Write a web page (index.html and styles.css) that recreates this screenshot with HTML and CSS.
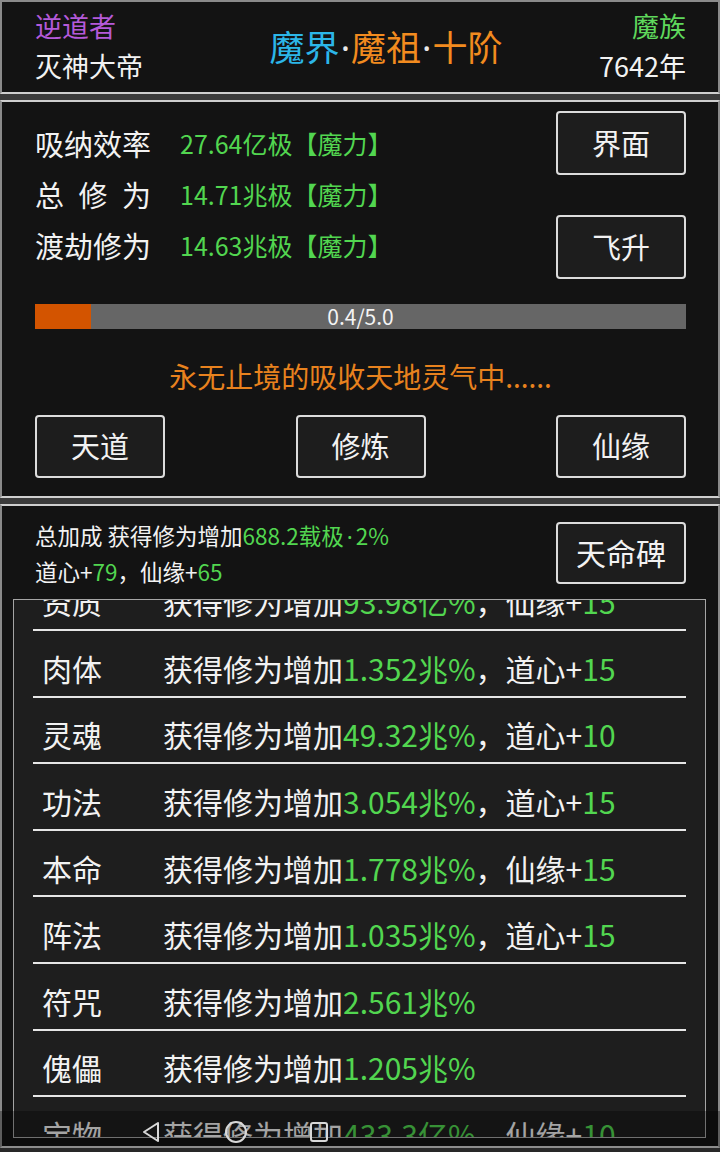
FILE: index.html
```html
<!DOCTYPE html>
<html lang="zh">
<head>
<meta charset="utf-8">
<title>修仙</title>
<link rel="stylesheet" href="styles.css">
</head>
<body>
<div class="page">
  <section class="panel header">
    <div class="hcol">
      <div class="purple">逆道者</div>
      <div>灭神大帝</div>
    </div>
    <div class="title"><span class="cyan">魔界</span><span class="dot">·</span><span class="orange">魔祖</span><span class="dot">·</span><span class="orange">十阶</span></div>
    <div class="hcol right">
      <div class="green">魔族</div>
      <div>7642年</div>
    </div>
  </section>

  <section class="panel main">
    <div class="top">
      <div class="stats">
        <div class="stat"><div class="label">吸纳效率</div><div class="val">27.64亿极【魔力】</div></div>
        <div class="stat"><div class="label">总修为</div><div class="val">14.71兆极【魔力】</div></div>
        <div class="stat"><div class="label">渡劫修为</div><div class="val">14.63兆极【魔力】</div></div>
      </div>
      <div class="btncol">
        <div class="btn">界面</div>
        <div class="btn">飞升</div>
      </div>
    </div>
    <div class="bar">
      <div class="fill" style="width:8.6%"></div>
      <div class="bar-text">0.4/5.0</div>
    </div>
    <div class="msg">永无止境的吸收天地灵气中......</div>
    <div class="btnrow">
      <div class="btn">天道</div>
      <div class="btn">修炼</div>
      <div class="btn">仙缘</div>
    </div>
  </section>

  <section class="panel bonus-panel">
    <div class="bonus-head">
      <div class="bonus">
        <div>总加成 获得修为增加<span class="g">688.2载极<span class="ndot">·</span>2%</span></div>
        <div>道心+<span class="g">79</span>，仙缘+<span class="g">65</span></div>
      </div>
      <div class="btn big">天命碑</div>
    </div>
    <div class="list">
      <div class="rows">
        <div class="row"><span class="rlabel">资质</span><span>获得修为增加<span class="g">93.98亿%</span>，仙缘+<span class="g">15</span></span></div>
        <div class="row"><span class="rlabel">肉体</span><span>获得修为增加<span class="g">1.352兆%</span>，道心+<span class="g">15</span></span></div>
        <div class="row"><span class="rlabel">灵魂</span><span>获得修为增加<span class="g">49.32兆%</span>，道心+<span class="g">10</span></span></div>
        <div class="row"><span class="rlabel">功法</span><span>获得修为增加<span class="g">3.054兆%</span>，道心+<span class="g">15</span></span></div>
        <div class="row"><span class="rlabel">本命</span><span>获得修为增加<span class="g">1.778兆%</span>，仙缘+<span class="g">15</span></span></div>
        <div class="row"><span class="rlabel">阵法</span><span>获得修为增加<span class="g">1.035兆%</span>，道心+<span class="g">15</span></span></div>
        <div class="row"><span class="rlabel">符咒</span><span>获得修为增加<span class="g">2.561兆%</span></span></div>
        <div class="row"><span class="rlabel">傀儡</span><span>获得修为增加<span class="g">1.205兆%</span></span></div>
        <div class="row"><span class="rlabel">宝物</span><span>获得修为增加<span class="g">433.3亿%</span>，仙缘+<span class="g">10</span></span></div>
      </div>
    </div>
  </section>
</div>

<nav class="nav">
  <svg class="ico tri" width="20" height="24" viewBox="0 0 20 24"><path d="M17 3 L3 12 L17 21 Z" fill="none" stroke="#d8d8d8" stroke-width="2" stroke-linejoin="round"/></svg>
  <svg class="ico circ" width="24" height="24" viewBox="0 0 24 24"><circle cx="12" cy="12" r="10" fill="none" stroke="#d8d8d8" stroke-width="2"/></svg>
  <svg class="ico sq" width="20" height="24" viewBox="0 0 20 24"><rect x="2" y="3" width="16" height="18" rx="2" fill="none" stroke="#d8d8d8" stroke-width="2"/></svg>
</nav>
</body>
</html>
```

FILE: styles.css
```css
* { box-sizing: border-box; margin: 0; padding: 0; }

html, body {
  width: 720px;
  height: 1152px;
  overflow: hidden;
}

body {
  background: #3b3b3b;
  font-family: "Noto Sans CJK SC", "Noto Sans", sans-serif;
  color: #f2f2f2;
}

.page {
  display: flex;
  flex-direction: column;
  gap: 6px;
  height: 1148px;
}

.panel {
  background: #131313;
  border: 2px solid #cfcfcf;
  border-left-color: #8a8a8a;
  border-right-color: #8a8a8a;
}

/* header */
.header {
  height: 94px;
  display: flex;
  align-items: center;
  padding: 0 32px 0 33px;
  border-top-color: #8a8a8a;
}

.hcol {
  font-size: 27px;
  line-height: 40px;
  white-space: nowrap;
  margin-top: -2px;
}

.hcol.right { text-align: right; }

.title {
  flex: 1;
  text-align: center;
  font-size: 35px;
  line-height: 44px;
  padding-left: 30px;
  white-space: nowrap;
}

.purple { color: #b45ad9; }
.cyan { color: #2cb6e8; }
.orange { color: #f28b1f; }
.green { color: #5fd85c; }
.dot {
  color: #e8e8e8;
  font-family: "Noto Sans", sans-serif;
  margin: 0 1px;
}
.ndot {
  font-family: "Noto Sans", sans-serif;
  margin: 0 3px;
}
.g { color: #52d650; }

/* main panel */
.main {
  height: 398px;
  padding: 0 32px 0 33px;
  display: flex;
  flex-direction: column;
}

.top {
  display: flex;
  justify-content: space-between;
}

.stats { padding-top: 15px; }

.stat {
  display: flex;
  align-items: center;
  height: 51px;
}

.label {
  width: 116px;
  font-size: 29px;
  text-align: justify;
  text-align-last: justify;
  white-space: nowrap;
}

.val {
  margin-left: 29px;
  font-size: 25px;
  color: #52d650;
  white-space: nowrap;
}

.btncol {
  padding-top: 9px;
  display: flex;
  flex-direction: column;
  gap: 40px;
}

.btn {
  width: 130px;
  height: 64px;
  border: 2px solid #dcdcdc;
  border-radius: 4px;
  background: #1d1d1d;
  display: flex;
  align-items: center;
  justify-content: center;
  padding-bottom: 3px;
  font-size: 29px;
  color: #f2f2f2;
}

.bar {
  margin-top: 25px;
  height: 25px;
  background: #666666;
  display: grid;
}

.bar > * { grid-area: 1 / 1; }

.fill {
  background: #d35400;
  height: 100%;
}

.bar-text {
  text-align: center;
  font-size: 21px;
  line-height: 25px;
  color: #f4f4f4;
}

.msg {
  margin-top: 29px;
  text-align: center;
  font-size: 28px;
  line-height: 36px;
  color: #e8821e;
}

.btnrow {
  margin-top: 21px;
  display: flex;
  justify-content: space-between;
}

.btnrow .btn { height: 63px; }

/* bonus panel */
.bonus-panel {
  flex: 1;
  display: flex;
  flex-direction: column;
  min-height: 0;
}

.bonus-head {
  display: flex;
  justify-content: space-between;
  padding: 15px 32px 0 33px;
}

.bonus {
  font-size: 22.5px;
  line-height: 34px;
  white-space: nowrap;
  margin-top: -3px;
}

.btn.big {
  height: 62px;
  margin-top: 1px;
  font-size: 30px;
}

.list {
  flex: 1;
  margin: 11px 12px 8px 11px;
  border: 1px solid #a5a5a5;
  background: #1e1e1e;
  overflow: hidden;
}

.rows {
  margin: -35.6px 19px 0 19px;
}

.row {
  height: 66.6px;
  border-bottom: 2px solid #e6e6e6;
  display: flex;
  align-items: center;
  padding: 9px 0 0 9px;
  font-size: 30px;
  white-space: nowrap;
}

.rlabel { width: 121px; flex: none; }

/* system nav bar */
.nav {
  position: fixed;
  left: 0;
  right: 0;
  bottom: 0;
  height: 41px;
  background: rgba(0, 0, 0, 0.32);
  display: flex;
  align-items: center;
  padding-left: 141px;
}

.circ { margin-left: 63px; }
.sq { margin-left: 61px; }
```
